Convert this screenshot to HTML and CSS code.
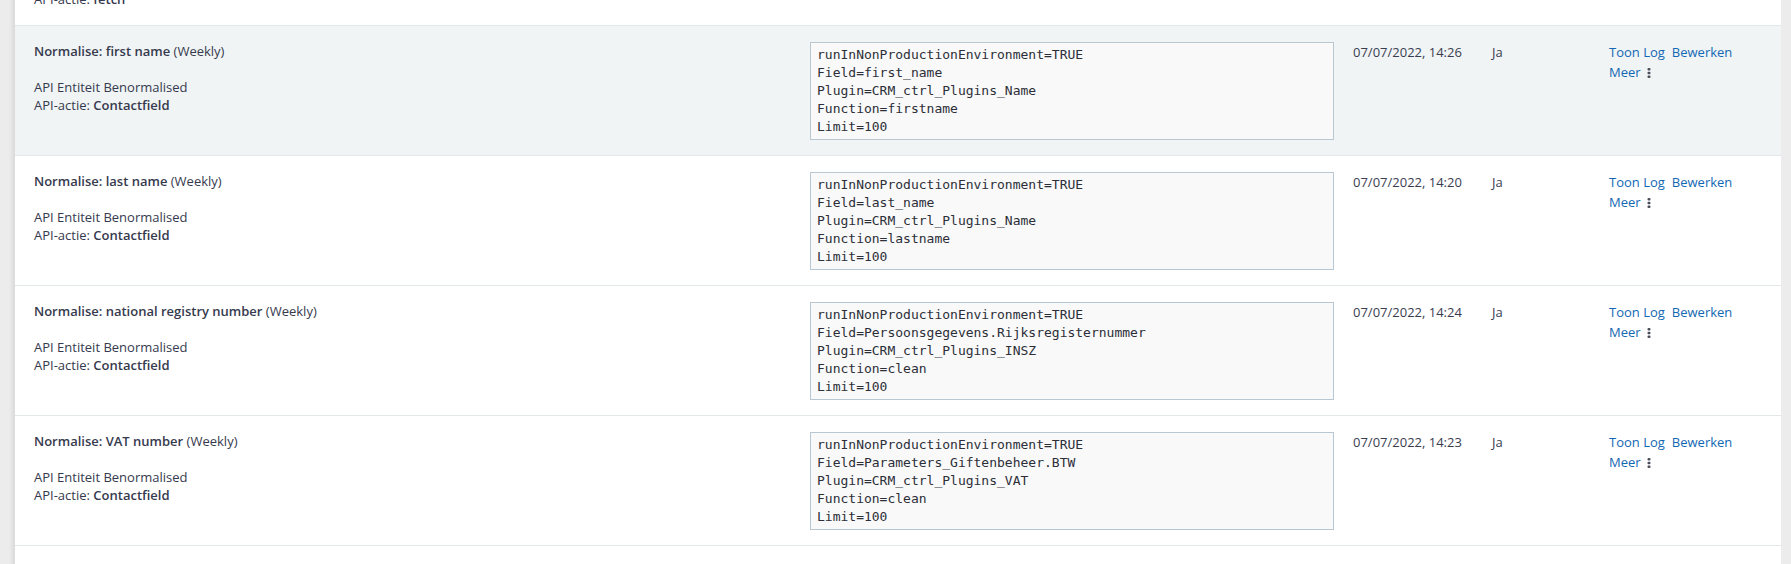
FILE: index.html
```html
<!DOCTYPE html>
<html lang="nl">
<head>
<meta charset="utf-8">
<title>Geplande taken</title>
<link rel="stylesheet" href="styles.css">
</head>
<body>
<div class="panel">
  <div class="row row-first">
    <div class="name">API-actie: <b>fetch</b></div>
  </div>

  <div class="row row-hover">
    <div class="name">
      <div><b>Normalise: first name</b> (Weekly)</div>
      <div class="spacer"></div>
      <div>API Entiteit Benormalised</div>
      <div>API-actie: <b>Contactfield</b></div>
    </div>
    <div class="code-cell"><pre class="params">runInNonProductionEnvironment=TRUE
Field=first_name
Plugin=CRM_ctrl_Plugins_Name
Function=firstname
Limit=100</pre></div>
    <div class="date">07/07/2022, 14:26</div>
    <div class="active">Ja</div>
    <div class="actions">
      <a href="#">Toon Log</a><a href="#">Bewerken</a>
      <a href="#" class="more">Meer <svg class="dots" width="4" height="10" viewBox="0 0 4 10"><rect x="0.5" y="0" width="3" height="2.6" rx="1"/><rect x="0.5" y="3.7" width="3" height="2.6" rx="1"/><rect x="0.5" y="7.4" width="3" height="2.6" rx="1"/></svg></a>
    </div>
  </div>

  <div class="row">
    <div class="name">
      <div><b>Normalise: last name</b> (Weekly)</div>
      <div class="spacer"></div>
      <div>API Entiteit Benormalised</div>
      <div>API-actie: <b>Contactfield</b></div>
    </div>
    <div class="code-cell"><pre class="params">runInNonProductionEnvironment=TRUE
Field=last_name
Plugin=CRM_ctrl_Plugins_Name
Function=lastname
Limit=100</pre></div>
    <div class="date">07/07/2022, 14:20</div>
    <div class="active">Ja</div>
    <div class="actions">
      <a href="#">Toon Log</a><a href="#">Bewerken</a>
      <a href="#" class="more">Meer <svg class="dots" width="4" height="10" viewBox="0 0 4 10"><rect x="0.5" y="0" width="3" height="2.6" rx="1"/><rect x="0.5" y="3.7" width="3" height="2.6" rx="1"/><rect x="0.5" y="7.4" width="3" height="2.6" rx="1"/></svg></a>
    </div>
  </div>

  <div class="row">
    <div class="name">
      <div><b>Normalise: national registry number</b> (Weekly)</div>
      <div class="spacer"></div>
      <div>API Entiteit Benormalised</div>
      <div>API-actie: <b>Contactfield</b></div>
    </div>
    <div class="code-cell"><pre class="params">runInNonProductionEnvironment=TRUE
Field=Persoonsgegevens.Rijksregisternummer
Plugin=CRM_ctrl_Plugins_INSZ
Function=clean
Limit=100</pre></div>
    <div class="date">07/07/2022, 14:24</div>
    <div class="active">Ja</div>
    <div class="actions">
      <a href="#">Toon Log</a><a href="#">Bewerken</a>
      <a href="#" class="more">Meer <svg class="dots" width="4" height="10" viewBox="0 0 4 10"><rect x="0.5" y="0" width="3" height="2.6" rx="1"/><rect x="0.5" y="3.7" width="3" height="2.6" rx="1"/><rect x="0.5" y="7.4" width="3" height="2.6" rx="1"/></svg></a>
    </div>
  </div>

  <div class="row">
    <div class="name">
      <div><b>Normalise: VAT number</b> (Weekly)</div>
      <div class="spacer"></div>
      <div>API Entiteit Benormalised</div>
      <div>API-actie: <b>Contactfield</b></div>
    </div>
    <div class="code-cell"><pre class="params">runInNonProductionEnvironment=TRUE
Field=Parameters_Giftenbeheer.BTW
Plugin=CRM_ctrl_Plugins_VAT
Function=clean
Limit=100</pre></div>
    <div class="date">07/07/2022, 14:23</div>
    <div class="active">Ja</div>
    <div class="actions">
      <a href="#">Toon Log</a><a href="#">Bewerken</a>
      <a href="#" class="more">Meer <svg class="dots" width="4" height="10" viewBox="0 0 4 10"><rect x="0.5" y="0" width="3" height="2.6" rx="1"/><rect x="0.5" y="3.7" width="3" height="2.6" rx="1"/><rect x="0.5" y="7.4" width="3" height="2.6" rx="1"/></svg></a>
    </div>
  </div>

  <div class="row row-last"></div>
</div>
</body>
</html>
```

FILE: styles.css
```css
html, body {
  margin: 0;
  padding: 0;
}
body {
  background: #ececec;
  font-family: "Open Sans", "Liberation Sans", sans-serif;
  font-size: 13px;
  color: #363a4e;
  overflow: hidden;
  height: 564px;
}
.panel {
  margin: -10px 10px 0 15px;
  background: #ffffff;
  box-shadow: -3px 0 4px rgba(0, 0, 0, 0.08);
  min-height: 600px;
}
.row {
  display: grid;
  grid-template-columns: 776px 543px 139px 117px 1fr;
  padding: 16px 0 15px 19px;
  border-top: 1px solid #e2e7ea;
  line-height: 18px;
}
.row-first {
  border-top: none;
  padding-top: 0;
  padding-bottom: 17px;
}
.row-hover {
  background: #f0f4f5;
}
.row-last {
  min-height: 40px;
}
.name b {
  font-weight: 600;
}
.spacer {
  height: 18px;
}
.params {
  margin: 0;
  width: 524px;
  box-sizing: border-box;
  height: 98px;
  padding: 3px 6px;
  background: #f9f9f9;
  border: 1px solid #b9c7d3;
  font-family: "DejaVu Sans Mono", "Liberation Mono", monospace;
  font-size: 13px;
  line-height: 18px;
  color: #2c2e38;
  overflow: hidden;
}
.date, .active {
  line-height: 20px;
  color: #3a3d50;
}
.actions {
  line-height: 20px;
}
.actions a {
  color: #1268b3;
  text-decoration: none;
  margin-right: 7px;
}
.actions .more {
  display: inline-block;
}
.dots {
  fill: #4a4c57;
  margin-left: 3px;
  vertical-align: -1px;
}
```
